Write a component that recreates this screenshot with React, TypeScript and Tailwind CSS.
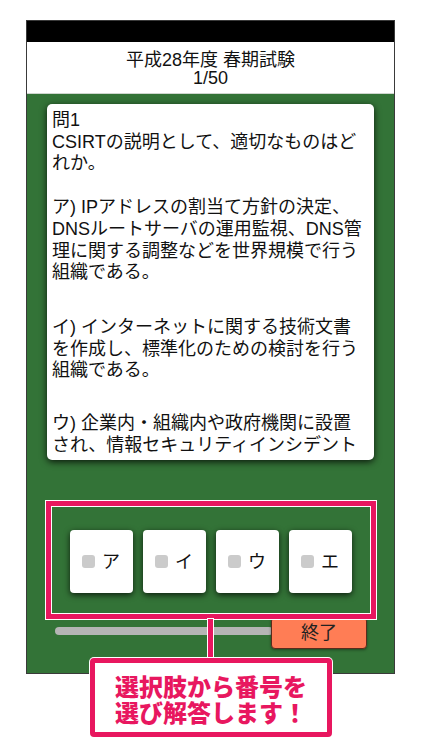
import React from "react";

function Choice({ label }: { label: string }) {
  return (
    <div className="w-[63px] h-[63px] bg-white rounded-[4px] shadow-[0_2px_6px_rgba(0,0,0,0.75)] flex items-center justify-center gap-[7px]">
      <div className="w-[13px] h-[13px] rounded-[3px] bg-[#cbcbcb]" />
      <span className="text-[18px] leading-[18px] text-[#111]">{label}</span>
    </div>
  );
}

export default function App() {
  return (
    <div className="relative w-[422px] h-[750px] bg-white overflow-hidden font-['Liberation_Sans','Noto_Sans_CJK_JP',sans-serif]">
      {/* phone frame */}
      <div className="ml-[26px] mt-[20px] w-[369px] border border-[#3a3a3a] flex flex-col">
        <div className="h-[21px] bg-black" />
        <div className="h-[52px] bg-white border-b border-[#cfd6cf] flex flex-col items-center justify-center text-[18px] leading-[18px] text-[#111] pt-[2px]">
          <div>平成28年度 春期試験</div>
          <div>1/50</div>
        </div>
        <div className="bg-[#337337] flex flex-col pb-[24px]">
          {/* question card */}
          <div className="mt-[10px] mx-[20px] h-[356px] bg-white rounded-[5px] shadow-[0_2px_7px_rgba(0,0,0,0.8)] overflow-hidden pl-[5px] pt-[6px] text-[18px] leading-[21.7px] text-[#111] whitespace-nowrap">
            <p>
              問1
              <br />
              CSIRTの説明として、適切なものはど
              <br />
              れか。
            </p>
            <p className="mt-[22px]">
              ア) IPアドレスの割当て方針の決定、
              <br />
              DNSルートサーバの運用監視、DNS管
              <br />
              理に関する調整などを世界規模で行う
              <br />
              組織である。
            </p>
            <p className="mt-[33px]">
              イ) インターネットに関する技術文書
              <br />
              を作成し、標準化のための検討を行う
              <br />
              組織である。
            </p>
            <p className="mt-[31px]">
              ウ) 企業内・組織内や政府機関に設置
              <br />
              され、情報セキュリティインシデント
            </p>
          </div>

          {/* choices */}
          <div className="mt-[70px] flex justify-center gap-[10px]">
            <Choice label="ア" />
            <Choice label="イ" />
            <Choice label="ウ" />
            <Choice label="エ" />
          </div>

          {/* progress + end */}
          <div className="mt-[24px] ml-[28px] mr-[27px] flex items-start">
            <div className="flex-1 mt-[10px] h-[8px] rounded-full bg-[#b5b5b5]" />
            <div className="w-[96px] h-[32px] -ml-[2px] rounded-[4px] border border-[#5a2b1c] bg-[#ff7d55] flex items-center justify-center text-[18px] text-[#222] shadow-[0_1px_3px_rgba(0,0,0,0.4)]">
              終了
            </div>
          </div>
        </div>
      </div>

      {/* annotation overlay: highlight box */}
      <div className="absolute left-[46px] top-[501px] w-[330px] h-[118px] border-[5px] border-[#e8175f] shadow-[0_0_0_1px_#ffffff,inset_0_0_0_1px_#ffffff]" />
      {/* connector */}
      <div className="absolute left-[208px] top-[619px] w-[5px] h-[40px] bg-[#e8175f] shadow-[0_0_0_1px_#ffffff]" />
      {/* callout */}
      <div className="absolute left-[90px] top-[658px] w-[242px] h-[79px] bg-white border-[5px] border-[#e8175f] rounded-[4px] shadow-[0_0_0_1px_#ffffff] flex flex-col items-center justify-center pt-[2px]">
        <div className="text-[24px] leading-[26px] font-black text-[#e8175f] font-['Noto_Sans_CJK_JP',sans-serif] text-center">
          選択肢から番号を
          <br />
          選び解答します！
        </div>
      </div>
    </div>
  );
}
